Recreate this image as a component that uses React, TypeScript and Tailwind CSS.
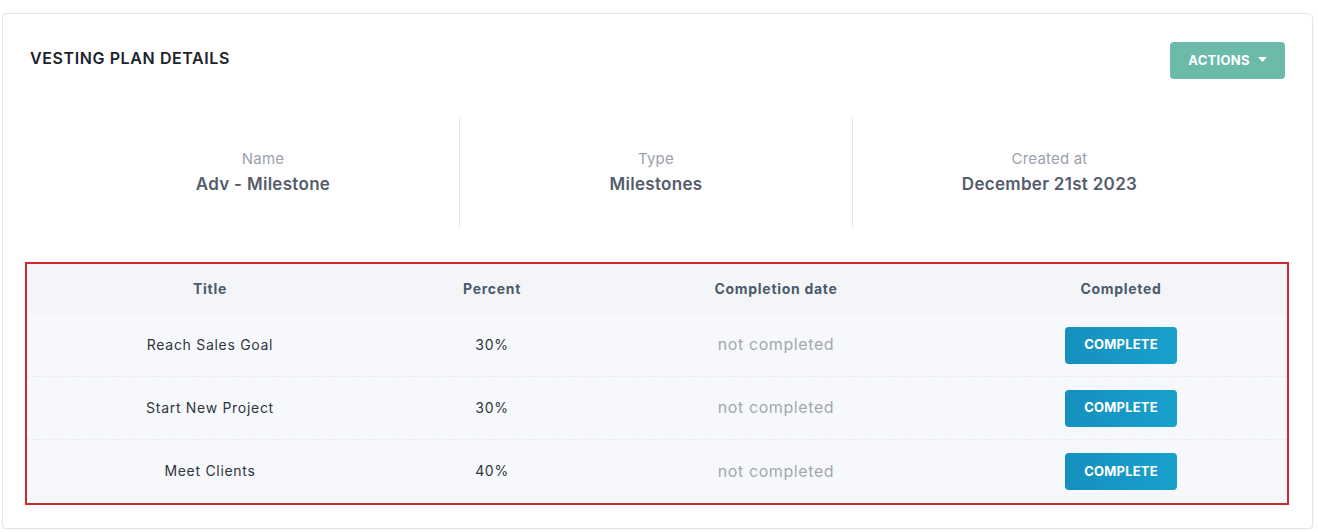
import { useState } from "react";

type Milestone = {
  title: string;
  percent: string;
};

const milestones: Milestone[] = [
  { title: "Reach Sales Goal", percent: "30%" },
  { title: "Start New Project", percent: "30%" },
  { title: "Meet Clients", percent: "40%" },
];

const cols = "grid grid-cols-[366px_198px_370px_320px]";

function InfoItem({ label, value, last }: { label: string; value: string; last?: boolean }) {
  return (
    <div
      className={
        "flex h-[111px] flex-col items-center justify-center " +
        (last ? "" : "border-r border-[#e6e8eb]")
      }
    >
      <span className="-mt-[2px] text-[15px] leading-[20px] tracking-[0.2px] text-[#9aa1ab]">{label}</span>
      <span className="mt-[4px] text-[17px] font-semibold leading-[22px] tracking-[0.3px] text-[#545d6b]">
        {value}
      </span>
    </div>
  );
}

function MilestoneRow({ item, last }: { item: Milestone; last?: boolean }) {
  return (
    <div
      className={
        cols +
        " h-[63px] items-center text-center " +
        (last ? "" : "border-b border-dashed border-[#e8ebf0]")
      }
    >
      <span className="-mt-[2px] text-[14px] tracking-[0.7px] text-[#2f3540]">{item.title}</span>
      <span className="-mt-[2px] text-[14px] tracking-[0.7px] text-[#2f3540]">{item.percent}</span>
      <span className="-mt-[2px] text-[16px] tracking-[0.6px] text-[#a3a7ae]">not completed</span>
      <div className="flex justify-center">
        <button className="h-[37px] w-[112px] rounded-[4px] bg-gradient-to-r from-[#1590bd] to-[#19a0cd] text-[13px] font-bold tracking-[0.2px] text-white">
          COMPLETE
        </button>
      </div>
    </div>
  );
}

export default function App() {
  const [open, setOpen] = useState(false);

  return (
    <div className="h-[532px] w-[1318px] bg-white pt-[13px] pl-[2px] font-['Inter',sans-serif]">
      <div className="h-[516px] w-[1311px] rounded-[4px] border border-[#e3e5e8] bg-white shadow-[0_1px_2px_rgba(0,0,0,0.03)]">
        <div className="flex items-start justify-between pl-[27px] pr-[27px] pt-[28px]">
          <h2 className="mt-[4px] text-[16px] font-semibold tracking-[0.6px] text-[#1d232b]">
            VESTING PLAN DETAILS
          </h2>
          <button
            onClick={() => setOpen(!open)}
            className="flex h-[37px] w-[115px] items-center justify-center gap-[8px] rounded-[4px] bg-[#6cbaa9] text-[13px] font-bold tracking-[0.3px] text-white"
          >
            ACTIONS
            <svg width="9" height="5" viewBox="0 0 9 5" className="mb-[2px]">
              <path d="M0 0h9L4.5 5z" fill="white" />
            </svg>
          </button>
        </div>

        <div className="ml-[64px] mt-[38px] grid w-[1179px] grid-cols-3">
          <InfoItem label="Name" value="Adv - Milestone" />
          <InfoItem label="Type" value="Milestones" />
          <InfoItem label="Created at" value="December 21st 2023" last />
        </div>

        <div className="ml-[22px] mt-[34px] w-[1264px] border-2 border-[#cf2a30] bg-[#f7f8fb]">
          <div className={cols + " h-[50px] items-center bg-[#f3f5f8] text-center"}>
            <span className="-mt-[2px] text-[14px] font-bold tracking-[0.7px] text-[#4a5b6c]">Title</span>
            <span className="-mt-[2px] text-[14px] font-bold tracking-[0.7px] text-[#4a5b6c]">Percent</span>
            <span className="-mt-[2px] text-[14px] font-bold tracking-[0.7px] text-[#4a5b6c]">Completion date</span>
            <span className="-mt-[2px] text-[14px] font-bold tracking-[0.7px] text-[#4a5b6c]">Completed</span>
          </div>
          {milestones.map((m, i) => (
            <MilestoneRow key={m.title} item={m} last={i === milestones.length - 1} />
          ))}
        </div>
      </div>
    </div>
  );
}
